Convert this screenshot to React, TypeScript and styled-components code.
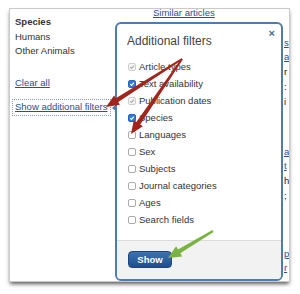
import React from "react"
import styled, { createGlobalStyle, css } from "styled-components"

const GlobalStyle = createGlobalStyle`
  html, body {
    margin: 0;
    padding: 0;
    background: #fff;
  }
  body {
    font-family: "Liberation Sans", Arial, sans-serif;
    font-size: 9.5px;
    color: #333;
  }
`

const Page = styled.div`
  position: relative;
  width: 300px;
  height: 294px;
  padding: 8px 0 0 9px;
  box-sizing: border-box;
  overflow: hidden;
`

const Frame = styled.div`
  position: relative;
  display: flex;
  width: 281px;
  height: 274px;
  box-sizing: border-box;
  border: 1px solid #c9c9c9;
  background: #fff;
  overflow: hidden;
  box-shadow: 0 3px 4px -1px rgba(0, 0, 0, 0.65);
`

const LeftCol = styled.div`
  flex: none;
  width: 143px;
  padding: 6px 0 0 5px;
  box-sizing: border-box;
  line-height: 14.5px;
`

const MiddleCol = styled.div`
  flex: none;
  width: 130px;
`

const RightCol = styled.div`
  flex: none;
  width: 6px;
  padding: 27px 0 0 1px;
  box-sizing: border-box;
`

const Heading = styled.div`
  font-weight: bold;
  color: #333;
`

const Link = styled.a<{ $gap?: number }>`
  display: block;
  color: #2c4c9c;
  text-decoration: underline;
  margin-top: ${p => p.$gap || 0}px;
`

const FocusBlock = styled.div`
  margin-top: 10px;
`

const FocusLink = styled(Link)`
  display: inline-block;
  outline: 1px dotted #8a9bb0;
  outline-offset: 0;
  padding-right: 3px;
  margin-left: -2px;
  padding-left: 2px;
`

const TopLink = styled(Link)`
  margin-top: -2px;
  line-height: 12px;
`

const RelItem = styled.div<{ $gap: number }>`
  margin-top: ${p => p.$gap}px;
  white-space: nowrap;
`

const RelTitle = styled.a`
  display: block;
  color: #2c4c9c;
  text-decoration: underline;
  line-height: 14px;
`

const RelMeta = styled.div`
  color: #222;
  line-height: 15px;
`

const Caret = styled.div`
  position: absolute;
  left: 102px;
  top: 95px;
  width: 0;
  height: 0;
  border-top: 4px solid transparent;
  border-bottom: 4px solid transparent;
  border-right: 5px solid #4a79ad;
`

const Popup = styled.div`
  position: absolute;
  left: 105px;
  top: 13px;
  width: 168px;
  height: 259px;
  box-sizing: border-box;
  border: 2px solid #4d7cb0;
  border-radius: 6px;
  background: #fff;
  overflow: hidden;
  display: flex;
  flex-direction: column;
`

const Title = styled.div`
  font-size: 12px;
  line-height: 16px;
  color: #444;
  padding: 9px 0 0 10px;
`

const Close = styled.span`
  position: absolute;
  top: 3px;
  right: 6px;
  font-size: 11px;
  font-weight: bold;
  color: #4a6a94;
`

const List = styled.div`
  padding: 9px 0 0 11px;
  flex: 1;
`

const Row = styled.div`
  display: flex;
  align-items: center;
  gap: 3px;
  height: 17px;
  color: #333;
`

type BoxKind = "locked" | "checked" | "empty"

const Box = styled.span<{ $kind: BoxKind }>`
  flex: none;
  display: inline-flex;
  align-items: center;
  justify-content: center;
  width: 8px;
  height: 8px;
  border-radius: 2px;
  box-sizing: border-box;
  svg {
    width: 8px;
    height: 8px;
  }
  ${p =>
    p.$kind === "locked" &&
    css`
      border: 1px solid #cfcfcf;
      background: #f6f6f6;
      color: #a8a8a8;
    `}
  ${p =>
    p.$kind === "checked" &&
    css`
      border: 1px solid #2767c4;
      background: #3479d8;
      color: #fff;
    `}
  ${p =>
    p.$kind === "empty" &&
    css`
      border: 1px solid #aaa;
      background: #fff;
    `}
`

const Footer = styled.div`
  flex: none;
  height: 39px;
  border-top: 1px solid #dcdcdc;
  background: #f2f2f2;
  padding: 10px 0 0 11px;
  box-sizing: border-box;
`

const ShowButton = styled.button`
  width: 44px;
  height: 17px;
  padding: 0;
  border: 1px solid #1d4677;
  border-radius: 4px;
  background: linear-gradient(#3d73b3, #1f4f8c);
  color: #fff;
  font-family: "Liberation Sans", Arial, sans-serif;
  font-size: 9.5px;
  font-weight: bold;
`

const Overlay = styled.svg`
  position: absolute;
  left: 0;
  top: 0;
  width: 300px;
  height: 294px;
  pointer-events: none;
`

const filters: [string, BoxKind][] = [
  ["Article types", "locked"],
  ["Text availability", "checked"],
  ["Publication dates", "locked"],
  ["Species", "checked"],
  ["Languages", "empty"],
  ["Sex", "empty"],
  ["Subjects", "empty"],
  ["Journal categories", "empty"],
  ["Ages", "empty"],
  ["Search fields", "empty"],
]

const Check = () => (
  <svg viewBox="0 0 10 10">
    <path d="M2 5.2 L4.2 7.4 L8.2 2.6" fill="none" stroke="currentColor" strokeWidth="1.8" />
  </svg>
)

// arrow outline from tail to tip, shaft tapers toward the tail
const arrowPoints = (
  x1: number,
  y1: number,
  x2: number,
  y2: number,
  tailW: number,
  shaftW: number,
  headL: number,
  headW: number
) => {
  const len = Math.hypot(x2 - x1, y2 - y1)
  const dx = (x2 - x1) / len
  const dy = (y2 - y1) / len
  const nx = -dy
  const ny = dx
  const bx = x2 - dx * headL
  const by = y2 - dy * headL
  const pts = [
    [x1 + (nx * tailW) / 2, y1 + (ny * tailW) / 2],
    [bx + (nx * shaftW) / 2, by + (ny * shaftW) / 2],
    [bx + (nx * headW) / 2, by + (ny * headW) / 2],
    [x2, y2],
    [bx - (nx * headW) / 2, by - (ny * headW) / 2],
    [bx - (nx * shaftW) / 2, by - (ny * shaftW) / 2],
    [x1 - (nx * tailW) / 2, y1 - (ny * tailW) / 2],
  ]
  return pts.map(p => p.map(v => v.toFixed(1)).join(",")).join(" ")
}

const Arrows = () => (
  <Overlay viewBox="0 0 300 294">
    <polygon points={arrowPoints(182, 59, 106, 107, 2, 4.5, 13, 11)} fill="#a2251d" />
    <polygon points={arrowPoints(182, 59, 131, 134, 2, 4.5, 13, 11)} fill="#a2251d" />
    <polygon points={arrowPoints(213, 231, 168, 258, 2.5, 4.5, 13, 12)} fill="#79b443" />
  </Overlay>
)

export default function App() {
  return (
    <>
      <GlobalStyle />
      <Page>
        <Frame>
          <LeftCol>
            <Heading>Species</Heading>
            <div>Humans</div>
            <div>Other Animals</div>
            <Link href="#" $gap={17}>
              Clear all
            </Link>
            <FocusBlock>
              <FocusLink href="#">Show additional filters</FocusLink>
            </FocusBlock>
          </LeftCol>
          <MiddleCol>
            <TopLink href="#">Similar articles</TopLink>
          </MiddleCol>
          <RightCol>
            <RelItem $gap={0}>
              <RelTitle href="#">
                s
                <br />a
              </RelTitle>
              <RelMeta>r</RelMeta>
              <RelMeta>:</RelMeta>
              <RelMeta>i</RelMeta>
            </RelItem>
            <RelItem $gap={36}>
              <RelTitle href="#">
                a
                <br />t
              </RelTitle>
              <RelMeta>h</RelMeta>
              <RelMeta>;</RelMeta>
            </RelItem>
            <RelItem $gap={44}>
              <RelTitle href="#">
                p
                <br />r
              </RelTitle>
            </RelItem>
          </RightCol>
          <Caret />
          <Popup>
            <Close>×</Close>
            <Title>Additional filters</Title>
            <List>
              {filters.map(([label, kind]) => (
                <Row key={label}>
                  <Box $kind={kind}>{kind !== "empty" && <Check />}</Box>
                  <span>{label}</span>
                </Row>
              ))}
            </List>
            <Footer>
              <ShowButton>Show</ShowButton>
            </Footer>
          </Popup>
        </Frame>
        <Arrows />
      </Page>
    </>
  )
}
